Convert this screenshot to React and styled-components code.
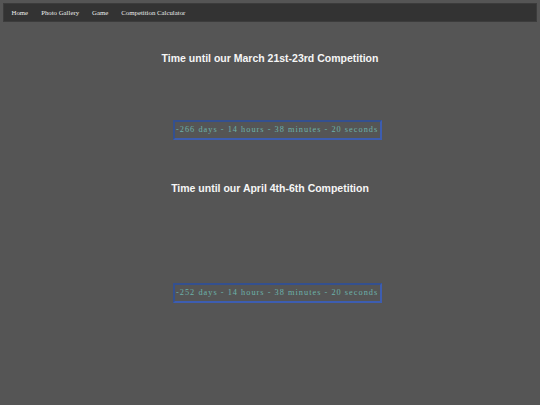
import React from 'react';
import styled, { createGlobalStyle } from 'styled-components';

const GlobalStyle = createGlobalStyle`
  html, body {
    margin: 0;
    padding: 0;
    background: #555555;
  }
  body {
    padding: 3px;
    font-family: "Liberation Serif", "Times New Roman", serif;
  }
`;

const NAV_LINKS = ['Home', 'Photo Gallery', 'Game', 'Competition Calculator'];

const COMPETITIONS = [
  { title: 'Time until our March 21st-23rd Competition', countdown: '-266 days - 14 hours - 38 minutes - 20 seconds', gap: 56 },
  { title: 'Time until our April 4th-6th Competition', countdown: '-252 days - 14 hours - 38 minutes - 20 seconds', gap: 89 },
];

const App = () => {
  return (
    <>
      <GlobalStyle />
      <NavBar>
        {NAV_LINKS.map((link) => (
          <NavLink key={link} href="#">
            {link}
          </NavLink>
        ))}
      </NavBar>
      <Main>
        {COMPETITIONS.map(({ title, countdown, gap }) => (
          <Section key={title} gap={gap}>
            <Title>{title}</Title>
            <Countdown>{countdown}</Countdown>
          </Section>
        ))}
      </Main>
    </>
  );
};

export default App;

const NavBar = styled.nav`
  display: flex;
  align-items: center;
  height: 17px;
  padding: 0 1px;
  background: #333333;
  border: 1px solid #3c3c3c;
`;

const NavLink = styled.a`
  padding: 0 6.5px;
  color: #ececec;
  font-size: 6.8px;
  text-decoration: none;
`;

const Main = styled.main`
  display: flex;
  flex-direction: column;
  gap: 42px;
  padding-top: 30px;
`;

const Section = styled.section`
  display: flex;
  flex-direction: column;
  align-items: center;
  gap: ${({ gap }) => gap}px;
`;

const Title = styled.h2`
  margin: 0;
  color: #f6f6f6;
  font-family: "Liberation Sans", Arial, sans-serif;
  font-size: 10.5px;
  font-weight: bold;
`;

const Countdown = styled.div`
  margin-left: 15px;
  width: 203px;
  padding: 2px 1px;
  border: 2px solid #34508f;
  border-bottom-color: #3d5db0;
  border-right-color: #3d5db0;
  color: #6cb2aa;
  font-size: 8.3px;
  line-height: 12px;
  letter-spacing: 1.02px;
  white-space: nowrap;
`;
